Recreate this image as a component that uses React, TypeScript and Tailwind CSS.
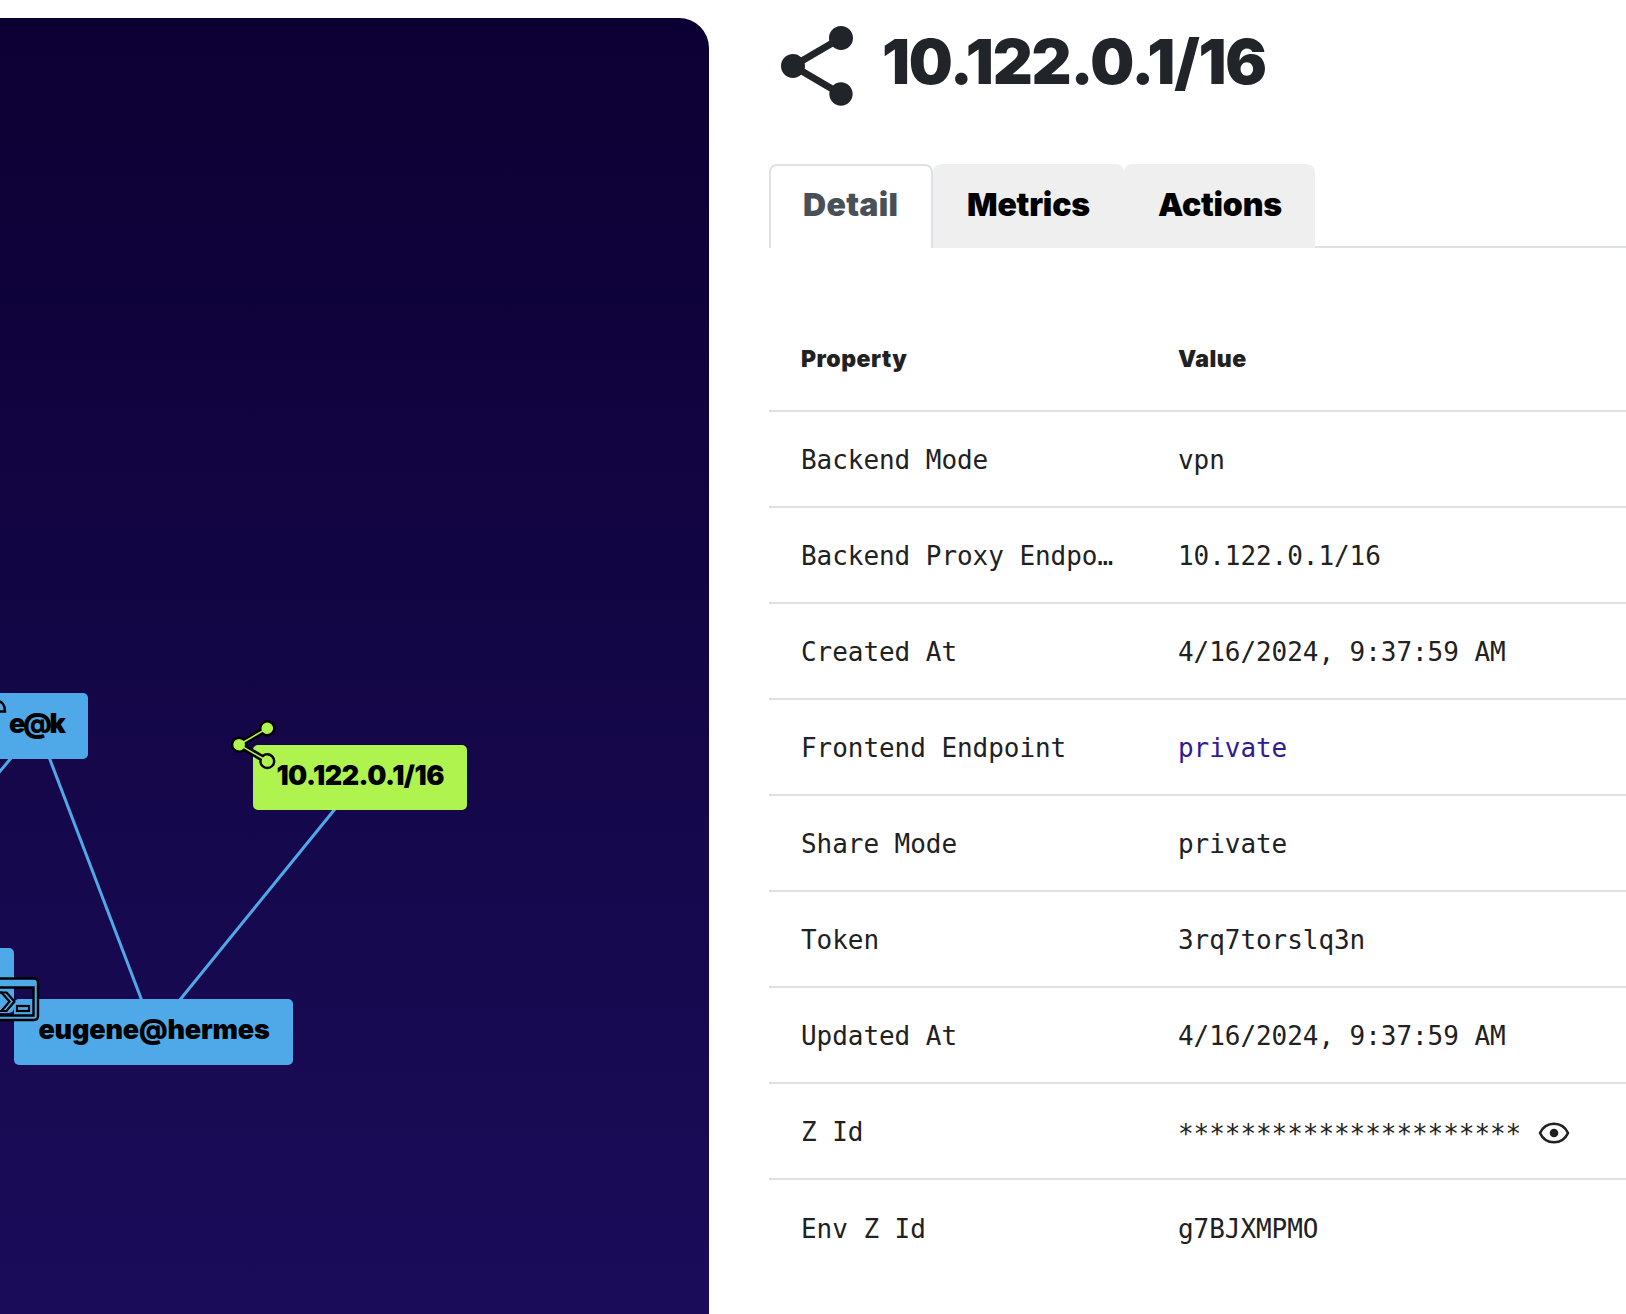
import React from "react";

const display = "font-['Inter'] font-black";

type NodeProps = { label: string; box: string; text: string };

function GraphNode({ label, box, text }: NodeProps) {
  return (
    <div className={`absolute flex rounded-[5px] ${box}`}>
      <span className={`${display} whitespace-nowrap text-[27px] leading-[62px] text-black ${text}`}>{label}</span>
    </div>
  );
}

const sharePath =
  "M18 16.08c-.76 0-1.44.3-1.96.77L8.91 12.7c.05-.23.09-.46.09-.7s-.04-.47-.09-.7l7.05-4.11c.54.5 1.25.81 2.04.81 1.66 0 3-1.34 3-3s-1.34-3-3-3-3 1.34-3 3c0 .24.04.47.09.7L8.04 9.81C7.5 9.31 6.79 9 6 9c-1.66 0-3 1.34-3 3s1.34 3 3 3c.79 0 1.5-.31 2.04-.81l7.12 4.16c-.05.21-.08.43-.08.65 0 1.61 1.31 2.92 2.92 2.92s2.92-1.31 2.92-2.92-1.31-2.92-2.92-2.92z";

function Graph() {
  return (
    <div className="relative mt-[18px] w-[709px] shrink-0 overflow-hidden rounded-tr-[30px] bg-linear-to-b/srgb from-[#0c0033] to-[#1b0c5a]">
      <svg className="absolute left-0 top-0" width="709" height="1296" viewBox="0 18 709 1296">
        <g stroke="#4fa9e8" strokeWidth="3">
          <line x1="49" y1="757" x2="142" y2="1001" />
          <line x1="335" y1="809" x2="179" y2="1001" />
          <line x1="12" y1="757" x2="-4" y2="776" />
        </g>
      </svg>
      <GraphNode label="e@k" box="left-[-60px] top-[675.4px] h-[65.2px] w-[148px] bg-[#4fa9e8]" text="ml-[69px] tracking-[-2.2px]" />
      <GraphNode label="10.122.0.1/16" box="left-[253.4px] top-[727.2px] h-[65.2px] w-[214px] bg-[#aff34f]" text="ml-[23px] tracking-[-0.5px]" />
      <div className="absolute left-[-60px] top-[929.6px] h-[65.2px] w-[74.3px] rounded-[5px] bg-[#4fa9e8]" />
      <GraphNode label="eugene@hermes" box="left-[14.4px] top-[981.4px] h-[65.2px] w-[278.4px] bg-[#4fa9e8]" text="ml-[24px] tracking-[-0.17px]" />
      <svg className="absolute left-0 top-0" width="709" height="1296" viewBox="0 18 709 1296">
        <path d={sharePath} transform="translate(225 716.5) scale(2.35)" fill="#aff34f" stroke="#000" strokeWidth="1.05" />
        <path
          fillRule="evenodd"
          d="M-20 978.500H34Q38 978.500 38 982.500V1016Q38 1020 34 1020H-20ZM-20 987.500H33.500V1015.500H-20Z"
          fill="#4fa9e8"
          stroke="#000"
          strokeWidth="2.4"
        />
        <path d="M-2 992.500H6.500L14.500 1001.500L6.500 1011H-2Z" fill="#4fa9e8" stroke="#000" strokeWidth="2.2" strokeLinejoin="round" />
        <path d="M-2 992.500H1.500L9.500 1001.500L1.500 1011H-2" fill="none" stroke="#000" strokeWidth="2.2" />
        <rect x="17" y="1006" width="12" height="5" fill="#4fa9e8" stroke="#000" strokeWidth="2.2" />
        <path d="M-3 701C2 701 5 705 5 711.500H-3" fill="none" stroke="#000" strokeWidth="2.4" />
      </svg>
    </div>
  );
}

const rows: [string, string][] = [
  ["Backend Mode", "vpn"],
  ["Backend Proxy Endpo…", "10.122.0.1/16"],
  ["Created At", "4/16/2024, 9:37:59 AM"],
  ["Frontend Endpoint", "private"],
  ["Share Mode", "private"],
  ["Token", "3rq7torslq3n"],
  ["Updated At", "4/16/2024, 9:37:59 AM"],
  ["Z Id", "**********************"],
  ["Env Z Id", "g7BJXMPMO"],
];

function valueStyle(name: string) {
  if (name === "Frontend Endpoint") return "text-[#311b92]";
  if (name === "Z Id") return "pt-1";
  return "";
}

function Eye() {
  return (
    <svg className="ml-[17px] mt-px" width="32" height="24" viewBox="0 0 32 24">
      <path
        d="M2 12C5 5.500 10 2.700 16 2.700S27 5.500 30 12C27 18.500 22 21.300 16 21.300S5 18.500 2 12Z"
        fill="none"
        stroke="#212121"
        strokeWidth="2.6"
        strokeLinejoin="round"
      />
      <circle cx="16" cy="12" r="4.300" fill="#212121" />
    </svg>
  );
}

export default function App() {
  return (
    <div className="flex h-[1314px] w-[1626px] overflow-hidden bg-white">
      <Graph />
      <div className="ml-[60px] flex min-w-0 flex-1 flex-col">
        <header className="mt-[18px] flex h-24 items-center">
          <svg width="96" height="96" viewBox="0 0 24 24" fill="#212429">
            <path d={sharePath} />
          </svg>
          <h1 className={`${display} ml-[17px] -mt-[9px] whitespace-nowrap text-[62px] leading-[72px] tracking-[-1.2px] text-[#212429]`}>
            10.122.0.1/16
          </h1>
        </header>
        <nav className={`${display} mt-[50px] flex h-[84px] text-[32px] leading-[82px]`}>
          <div className="w-[164px] rounded-t-lg border-2 border-b-0 border-[#dee2e6] pl-8 leading-[78px] tracking-[0.3px] text-[#495057]">
            <span>Detail</span>
          </div>
          <div className="w-[191px] rounded-t-lg bg-[#efefef] pl-[34px] tracking-[-0.2px] text-black">
            <span>Metrics</span>
          </div>
          <div className="w-[191px] rounded-t-lg bg-[#efefef] pl-[34px] tracking-[-0.2px] text-black">
            <span>Actions</span>
          </div>
          <div className="flex-1 border-b-2 border-[#dee2e6]" />
        </nav>
        <div className={`${display} mt-[60px] flex h-[104px] items-center border-b-2 border-[#e0e0e0] pl-8 text-[23px] tracking-[0.5px] text-[#212121]`}>
          <div className="w-[377px]">Property</div>
          <div>Value</div>
        </div>
        {rows.map(([name, value], i) => (
          <div
            key={name}
            className={`flex h-24 shrink-0 items-center pl-8 pt-0.5 font-['DejaVu_Sans_Mono'] text-[26px] tracking-[-0.053px] text-[#212121] ${i < 8 ? "border-b-2 border-[#e0e0e0]" : ""}`}
          >
            <div className="w-[377px] whitespace-nowrap">{name}</div>
            <div className={valueStyle(name)}>{value}</div>
            {name === "Z Id" && <Eye />}
          </div>
        ))}
      </div>
    </div>
  );
}
